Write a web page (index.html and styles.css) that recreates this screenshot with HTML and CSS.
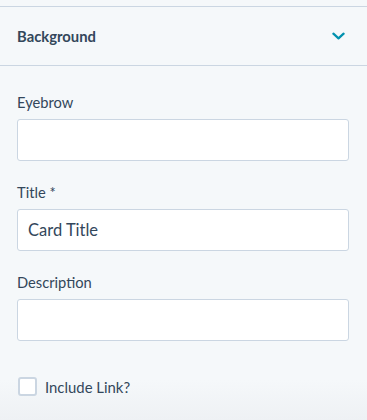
FILE: index.html
```html
<!DOCTYPE html>
<html lang="en">
<head>
  <meta charset="UTF-8">
  <meta name="viewport" content="width=device-width, initial-scale=1.0">
  <title>Card Fields</title>
  <link rel="stylesheet" href="styles.css">
</head>
<body>
  <div class="top-gap"></div>

  <div class="section-header">
    <span class="section-title">Background</span>
    <svg class="chevron" viewBox="0 0 14 8" fill="none"><path d="M1.5 1.5l5.5 5 5.5-5" stroke-width="2.4" stroke-linecap="round" stroke-linejoin="round"/></svg>
  </div>

  <div class="fields">
    <div class="field">
      <label class="field-label" for="eyebrow">Eyebrow</label>
      <input class="field-input" id="eyebrow" type="text">
    </div>

    <div class="field">
      <label class="field-label" for="title">Title *</label>
      <input class="field-input" id="title" type="text" value="Card Title">
    </div>

    <div class="field">
      <label class="field-label" for="desc">Description</label>
      <input class="field-input" id="desc" type="text">
    </div>

    <label class="check-row">
      <span class="check-box"></span>
      Include Link?
    </label>
  </div>
</body>
</html>
```

FILE: styles.css
```css
* {
  box-sizing: border-box;
  margin: 0;
  padding: 0;
}

body {
  font-family: 'Lato', 'Noto Sans', sans-serif;
  background: linear-gradient(to bottom, #f5f8fa 0, #f5f8fa 380px, #eef1f4 420px);
  color: #33475b;
  min-height: 420px;
}

.top-gap {
  height: 7px;
  border-bottom: 1px solid #cbd6e2;
}

.section-header {
  height: 59px;
  padding: 0 22px 0 17px;
  display: flex;
  align-items: center;
  justify-content: space-between;
  border-bottom: 1px solid #cbd6e2;
}

.section-title {
  font-size: 14.8px;
  font-weight: 700;
  color: #33475b;
}

.chevron {
  width: 13px;
  height: 8px;
  stroke: #0091ae;
  margin-top: 0;
}

.fields {
  padding: 26px 18px 0 17px;
  display: flex;
  flex-direction: column;
}

.field {
  display: flex;
  flex-direction: column;
  margin-bottom: 21px;
}

.field-label {
  font-size: 14.7px;
  line-height: 20px;
  margin-bottom: 7px;
  color: #33475b;
}

.field-input {
  height: 42px;
  border: 1px solid #cbd6e2;
  border-radius: 3px;
  background-color: white;
  padding: 0 10px;
  font-family: inherit;
  font-size: 16.5px;
  color: #33475b;
  outline: none;
}

.check-row {
  margin-top: 15px;
  display: flex;
  align-items: center;
  gap: 8px;
  font-size: 14.9px;
  color: #33475b;
  padding-left: 1px;
}

.check-box {
  width: 19px;
  height: 19px;
  border: 2px solid #cbd6e2;
  border-radius: 3px;
  background-color: white;
}
```
